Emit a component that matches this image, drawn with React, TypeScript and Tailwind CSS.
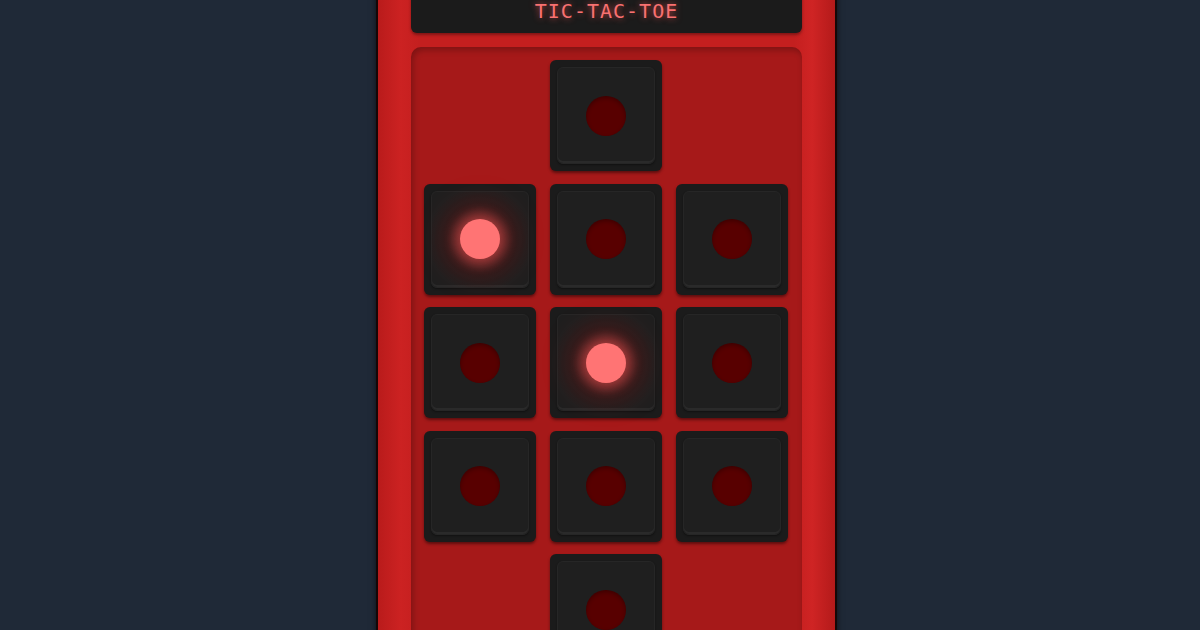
// 5-row cross layout: single key on top and bottom, full 3x3 in the middle
const keys = [
  { id: 1, cls: "col-start-2" },
  { id: 2, cls: "col-start-1" },
  { id: 3, cls: "" },
  { id: 4, cls: "" },
  { id: 5, cls: "col-start-1" },
  { id: 6, cls: "" },
  { id: 7, cls: "" },
  { id: 8, cls: "col-start-1" },
  { id: 9, cls: "" },
  { id: 10, cls: "" },
  { id: 11, cls: "col-start-2" },
];

const litIds = new Set([2, 6]);

function Key({ on, className }: { on: boolean; className: string }) {
  return (
    <button
      className={`${className} flex h-[111px] items-center justify-center rounded-[6px] bg-[#1b1b1b] p-[7px] shadow-[0_2px_3px_rgba(0,0,0,0.45)]`}
    >
      <div
        className={`flex h-full w-full items-center justify-center rounded-[6px] border border-[#262626] shadow-[inset_0_-2px_0_rgba(255,255,255,0.05),0_1px_2px_rgba(0,0,0,0.4)] ${
          on
            ? "bg-[radial-gradient(circle,rgba(130,35,35,0.6)_0%,rgba(50,22,22,0.45)_50%,#1f1f1f_78%)]"
            : "bg-[#1f1f1f]"
        }`}
      >
        {on ? (
          <div className="h-[40px] w-[40px] rounded-full bg-[#ff7474] shadow-[0_0_12px_5px_rgba(255,90,90,0.45),0_0_34px_14px_rgba(255,60,60,0.2)]" />
        ) : (
          <div className="h-[40px] w-[40px] rounded-full bg-[#580000] shadow-[inset_0_2px_4px_rgba(0,0,0,0.3)]" />
        )}
      </div>
    </button>
  );
}

export default function App() {
  return (
    <div className="flex h-[630px] w-full justify-center overflow-hidden bg-[#1f2937]">
      <div className="ml-[13px] -mt-[29px] flex h-[760px] w-[461px] flex-col gap-[14px] border-2 border-[#150707] bg-[linear-gradient(90deg,#b91b1b_0%,#cc2222_5%,#c41f1f_9%,#c41f1f_91%,#cf2424_95%,#b31a1a_100%)] px-[33px] shadow-[0_0_6px_rgba(0,0,0,0.6)]">
        <div className="flex h-[60px] shrink-0 items-end justify-center rounded-b-[6px] bg-[#1b1b1b] pb-[12px] shadow-[0_2px_3px_rgba(0,0,0,0.35)]">
          <span className="font-['DejaVu_Sans_Mono',monospace] text-[20px] leading-none tracking-[1px] text-[#f87171] [text-shadow:0_0_6px_rgba(255,80,80,0.75)]">
            TIC-TAC-TOE
          </span>
        </div>

        <div className="rounded-[10px] bg-[#a61919] px-[13px] pt-[13px] pb-[13px] shadow-[inset_2px_3px_6px_rgba(0,0,0,0.25)]">
          <div className="grid grid-cols-[repeat(3,112px)] gap-x-[14px] gap-y-[12.5px]">
            {keys.map((k) => (
              <Key key={k.id} on={litIds.has(k.id)} className={k.cls} />
            ))}
          </div>
        </div>
      </div>
    </div>
  );
}
